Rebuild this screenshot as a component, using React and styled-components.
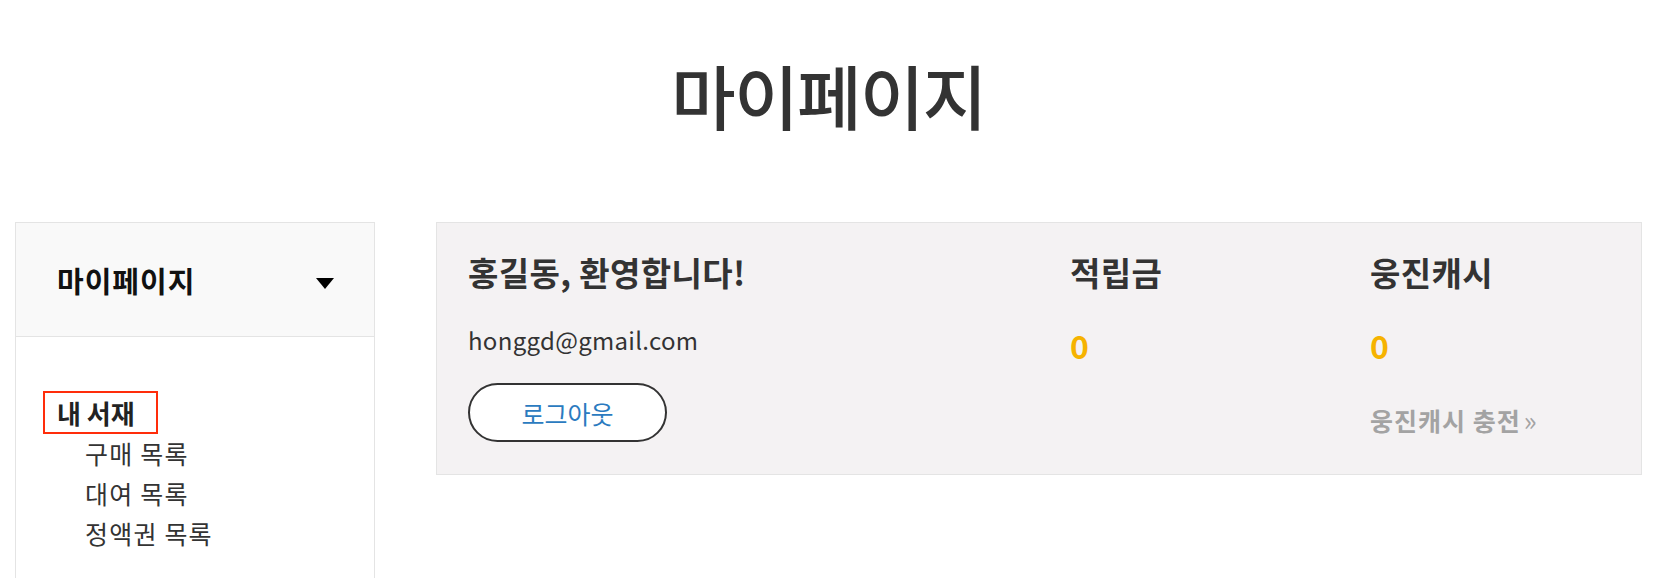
import React from 'react';
import styled, { createGlobalStyle } from 'styled-components';

const GlobalStyle = createGlobalStyle`
  html, body {
    margin: 0;
    padding: 0;
    background: #fff;
  }
  body {
    font-family: "Noto Sans CJK KR", "Noto Sans", sans-serif;
    color: #333;
  }
  * {
    box-sizing: border-box;
  }
`;

const Container = styled.div`
  width: 1656px;
  height: 578px;
  overflow: hidden;
  padding: 0 14px 0 15px;
`;

const Title = styled.h1`
  margin: 55px 0 87px;
  text-align: center;
  font-size: 70px;
  line-height: 80px;
  font-weight: 500;
  letter-spacing: -1.5px;
  color: #333;
`;

const Wrapper = styled.div`
  display: flex;
  align-items: flex-start;
  gap: 61px;
`;

const Sidebar = styled.aside`
  width: 360px;
  flex-shrink: 0;
  min-height: 420px;
  border: 1px solid #e4e4e4;
`;

const SideHeader = styled.div`
  height: 114px;
  padding: 0 40px 0 41px;
  display: flex;
  align-items: center;
  justify-content: space-between;
  background: #f9f9f9;
  border-bottom: 1px solid #e4e4e4;
`;

const SideTitle = styled.span`
  font-size: 29px;
  font-weight: 700;
  letter-spacing: 1px;
  color: #111;
`;

const Caret = styled.span`
  width: 0;
  height: 0;
  margin-top: 8px;
  border-left: 9.5px solid transparent;
  border-right: 9.5px solid transparent;
  border-top: 11px solid #000;
`;

const Menu = styled.nav`
  padding: 54px 0 0 27px;
`;

const MenuGroup = styled.div`
  width: 115px;
  height: 43px;
  padding: 0 12px;
  border: 2px solid ${(props) => (props.active ? '#ff2d0a' : 'transparent')};
  font-size: 26px;
  line-height: 39px;
  font-weight: 700;
  color: #222;
  white-space: nowrap;
`;

const SubList = styled.ul`
  list-style: none;
  margin: -1px 0 0;
  padding: 0 0 0 42px;
`;

const SubItem = styled.li`
  font-size: 25px;
  line-height: 40px;
  letter-spacing: 1.2px;
  color: #333;
`;

const Panel = styled.section`
  flex: 1;
  height: 253px;
  display: grid;
  grid-template-columns: 1fr 300px 239px;
  align-items: start;
  padding: 29px 32px 0 31px;
  background: #f4f2f3;
  border: 1px solid #e4e4e4;
`;

const Column = styled.div`
  display: flex;
  flex-direction: column;
  align-items: flex-start;
`;

const Heading = styled.h2`
  margin: 0;
  font-size: 33px;
  line-height: 40px;
  font-weight: 700;
  letter-spacing: 0.4px;
  color: #333;
`;

const Email = styled.p`
  margin: 33px 0 0;
  font-size: 24px;
  line-height: 30px;
  letter-spacing: 0.3px;
  color: #333;
`;

const LogoutButton = styled.button`
  margin-top: 28px;
  width: 199px;
  height: 59px;
  border: 2px solid #333;
  border-radius: 30px;
  background: #fff;
  font-family: inherit;
  font-size: 25px;
  color: #2b7bc0;
  cursor: pointer;
`;

const Value = styled.span`
  margin-top: 35px;
  font-size: 32px;
  line-height: 36px;
  font-weight: 700;
  color: #f6b300;
`;

const ChargeLink = styled.a`
  margin-top: 42px;
  font-size: 25px;
  line-height: 30px;
  font-weight: 700;
  letter-spacing: 1px;
  color: #a3a3a3;
  text-decoration: none;
`;

const Arrow = styled.span`
  margin-left: 3px;
  font-size: 27px;
  font-weight: 400;
`;

const App = () => {
  return (
    <Container>
      <GlobalStyle />
      <Title>마이페이지</Title>
      <Wrapper>
        <Sidebar>
          <SideHeader>
            <SideTitle>마이페이지</SideTitle>
            <Caret />
          </SideHeader>
          <Menu>
            <MenuGroup active>내 서재</MenuGroup>
            <SubList>
              <SubItem>구매 목록</SubItem>
              <SubItem>대여 목록</SubItem>
              <SubItem>정액권 목록</SubItem>
            </SubList>
          </Menu>
        </Sidebar>
        <Panel>
          <Column>
            <Heading>홍길동, 환영합니다!</Heading>
            <Email>honggd@gmail.com</Email>
            <LogoutButton>로그아웃</LogoutButton>
          </Column>
          <Column>
            <Heading>적립금</Heading>
            <Value>0</Value>
          </Column>
          <Column>
            <Heading>웅진캐시</Heading>
            <Value>0</Value>
            <ChargeLink href="#">
              웅진캐시 충전<Arrow>»</Arrow>
            </ChargeLink>
          </Column>
        </Panel>
      </Wrapper>
    </Container>
  );
};

export default App;
